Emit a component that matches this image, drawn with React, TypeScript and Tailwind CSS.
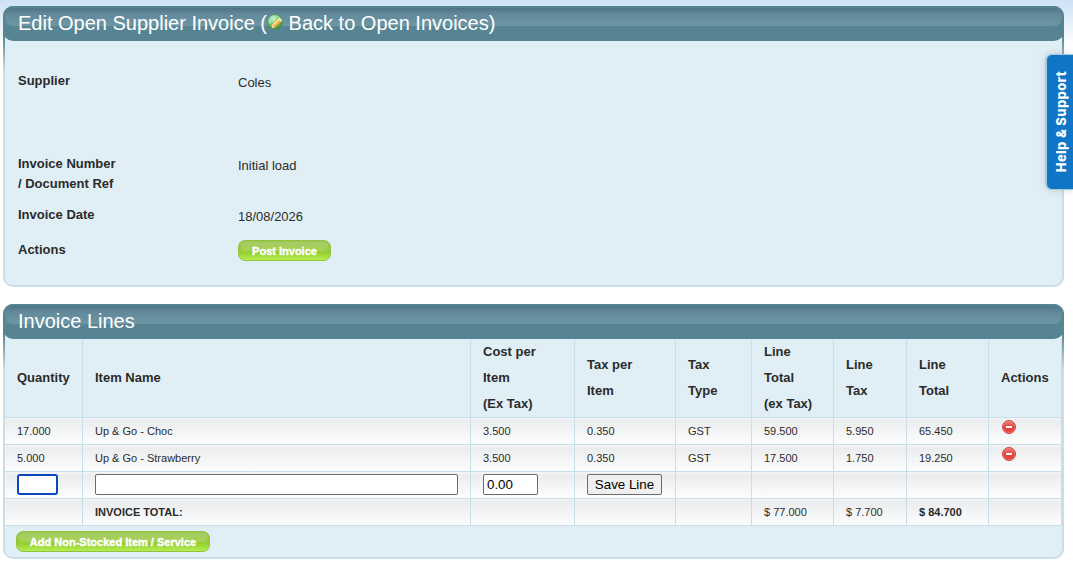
import React, { useState } from "react";

interface InvoiceLine {
  id: string;
  quantity: string;
  name: string;
  cost: string;
  tax: string;
  taxType: string;
  totalExTax: string;
  lineTax: string;
  lineTotal: string;
}

const invoiceLines: InvoiceLine[] = [
  {
    id: "1",
    quantity: "17.000",
    name: "Up & Go - Choc",
    cost: "3.500",
    tax: "0.350",
    taxType: "GST",
    totalExTax: "59.500",
    lineTax: "5.950",
    lineTotal: "65.450",
  },
  {
    id: "2",
    quantity: "5.000",
    name: "Up & Go - Strawberry",
    cost: "3.500",
    tax: "0.350",
    taxType: "GST",
    totalExTax: "17.500",
    lineTax: "1.750",
    lineTotal: "19.250",
  },
];

const columns = [
  { label: ["Quantity"], width: "w-[78px]" },
  { label: ["Item Name"], width: "w-[388px]" },
  { label: ["Cost per", "Item", "(Ex Tax)"], width: "w-[104px]" },
  { label: ["Tax per", "Item"], width: "w-[101px]" },
  { label: ["Tax", "Type"], width: "w-[76px]" },
  { label: ["Line", "Total", "(ex Tax)"], width: "w-[82px]" },
  { label: ["Line", "Tax"], width: "w-[73px]" },
  { label: ["Line", "Total"], width: "w-[82px]" },
  { label: ["Actions"], width: "w-[73px]" },
];

const EditIcon = () => (
  <svg className="w-4 h-4 mb-0.5 shrink-0" viewBox="0 0 16 16">
    <defs>
      <radialGradient id="globe" cx="0.4" cy="0.25" r="0.85">
        <stop offset="0" stopColor="#d2f5c4" />
        <stop offset="0.5" stopColor="#74c969" />
        <stop offset="1" stopColor="#237c35" />
      </radialGradient>
    </defs>
    <circle cx="8" cy="8" r="7.5" fill="url(#globe)" stroke="#3f8f58" strokeWidth="0.8" />
    <path d="M1.4 6.5 Q3 2 8 1.6 L6 5 L3.5 9 L2 10 Z" fill="#a9e0e0" opacity="0.7" />
    <path d="M4 14.6 L5 10.8 L12 4.2 L15 7 L8 13.5 Z" fill="#f3b544" stroke="#b57a1c" strokeWidth="0.6" />
    <path d="M5.6 11.2 L12.3 5" stroke="#fff0a8" strokeWidth="1.4" />
    <path d="M4 14.6 L5 10.8 L8 13.5 Z" fill="#f6deb4" />
    <path d="M4 14.6 L4.4 12.9 L5.7 14.1 Z" fill="#5b3420" />
    <path d="M11.2 4.9 L12.6 3.6 L15.3 6.2 L14 7.7 Z" fill="#e4e7d9" />
  </svg>
);

const RemoveIcon = () => (
  <svg className="block w-[14px] h-[14px]" viewBox="0 0 14 14">
    <defs>
      <linearGradient id="removeFill" x1="0" y1="0" x2="0" y2="1">
        <stop offset="0" stopColor="#ef8078" />
        <stop offset="0.5" stopColor="#e2423b" />
        <stop offset="1" stopColor="#e8463d" />
      </linearGradient>
    </defs>
    <circle cx="7" cy="7" r="6.5" fill="#ec8a83" stroke="#c9443d" strokeWidth="1" />
    <circle cx="7" cy="7" r="5.6" fill="url(#removeFill)" />
    <rect x="4" y="6" width="6" height="2" fill="#fff" />
  </svg>
);

// The strip behind the header keeps its lower corners in the body colour
const PanelHeader: React.FC<{ children: React.ReactNode }> = ({ children }) => (
  <div className="bg-[linear-gradient(#e0eff6,#e0eff6)] bg-[length:1057px_12px] bg-[position:2px_23px] bg-no-repeat">
    <div className="relative h-[35px] rounded-[10px] border-2 border-[#568493] bg-[#578492] before:absolute before:inset-x-0 before:top-0 before:h-[18px] before:rounded-lg before:bg-[linear-gradient(to_bottom,#4e7485_0,#62899a_6px,#6d97a5_18px)]">
      <h2 className="relative flex items-center h-[30px] pl-[13px] text-xl leading-[30px] text-white whitespace-pre">
        {children}
      </h2>
    </div>
  </div>
);

const Panel: React.FC<{
  title: React.ReactNode;
  height: string;
  children: React.ReactNode;
}> = ({ title, height, children }) => (
  <section
    className={`w-[1061px] ${height} rounded-[10px] bg-[linear-gradient(to_bottom,#578492_0,#578492_30px,#c8dee8_65px,#c8dee8_100%)]`}
  >
    <PanelHeader>{title}</PanelHeader>
    <div className="h-[calc(100%-35px)] px-0.5 pb-0.5">
      <div className="h-full rounded-b-lg bg-[#e0eff6]">{children}</div>
    </div>
  </section>
);

const GreenButton: React.FC<{ width: string; children: React.ReactNode }> = ({
  width,
  children,
}) => (
  <button
    className={`${width} relative block h-[21px] rounded-[7px] border border-[#91c43c] bg-[linear-gradient(to_bottom,#9cc653_0,#98cb42_9px,#96d030_12px,#b6ee52_100%)] before:absolute before:inset-x-[2px] before:top-px before:h-[9px] before:rounded-[5px] before:bg-[linear-gradient(to_bottom,#a5cb66,#a8d255)] text-[11px] leading-[20px] font-bold text-white whitespace-nowrap [-webkit-text-stroke:0.4px_white]`}
  >
    <span className="relative">{children}</span>
  </button>
);

const cell =
  "h-[27px] pl-3 pt-px border-r border-b border-[#c8dee8] bg-[linear-gradient(to_bottom,#f4f5f6_0,#ebecee_3px,#fbfcfc_24px,#fbfcfc_100%)]";

const inputCell =
  "h-[27px] pl-3 pb-px border-r border-b border-[#c8dee8] bg-[linear-gradient(to_bottom,#f4f5f6_0,#ebecee_3px,#fbfcfc_24px,#fbfcfc_100%)]";

const App: React.FC = () => {
  const [quantity, setQuantity] = useState("");
  const [itemName, setItemName] = useState("");
  const [cost, setCost] = useState("0.00");

  return (
    <div className="relative h-[562px] overflow-hidden bg-[linear-gradient(to_bottom,#cde2f5_0,#ffffff_45px)] pl-[3px] pt-1.5 font-['Liberation_Sans',Arial,sans-serif] text-[13px] text-[#2b2b2b]">
      <div className="flex flex-col gap-[17px]">
        {/* Invoice details */}
        <Panel
          height="h-[281px]"
          title={
            <>
              Edit Open Supplier Invoice (<EditIcon />
              {" Back to Open Invoices)"}
            </>
          }
        >
          <dl className="grid grid-cols-[220px_1fr] grid-rows-[83px_51px_35px_30px] pl-[13px] pt-[30px] leading-5">
            <dt className="font-bold">Supplier</dt>
            <dd className="pt-0.5">Coles</dd>
            <dt className="font-bold">
              Invoice Number
              <br />/ Document Ref
            </dt>
            <dd className="pt-0.5">Initial load</dd>
            <dt className="font-bold">Invoice Date</dt>
            <dd className="pt-0.5">18/08/2026</dd>
            <dt className="font-bold">Actions</dt>
            <dd>
              <GreenButton width="w-[93px]">Post Invoice</GreenButton>
            </dd>
          </dl>
        </Panel>

        {/* Invoice lines */}
        <Panel height="h-[255px]" title="Invoice Lines">
          <table className="w-[1057px] table-fixed border-separate border-spacing-0 text-left text-[11px]">
            <thead>
              <tr>
                {columns.map((column, index) => (
                  <th
                    key={index}
                    className={`${column.width} h-[79px] pl-3 border-r border-b border-[#c8dee8] text-[13px] leading-[26px] font-bold whitespace-nowrap`}
                  >
                    {column.label.map((line) => (
                      <div key={line}>{line}</div>
                    ))}
                  </th>
                ))}
              </tr>
            </thead>
            <tbody>
              {invoiceLines.map((line) => (
                <tr key={line.id}>
                  <td className={cell}>{line.quantity}</td>
                  <td className={cell}>{line.name}</td>
                  <td className={cell}>{line.cost}</td>
                  <td className={cell}>{line.tax}</td>
                  <td className={cell}>{line.taxType}</td>
                  <td className={cell}>{line.totalExTax}</td>
                  <td className={cell}>{line.lineTax}</td>
                  <td className={cell}>{line.lineTotal}</td>
                  <td className={`${cell} align-top`}>
                    <button className="block pl-px pt-px">
                      <RemoveIcon />
                    </button>
                  </td>
                </tr>
              ))}
              <tr>
                <td className={inputCell}>
                  <input
                    value={quantity}
                    onChange={(e) => setQuantity(e.target.value)}
                    className="block w-[41px] h-[21px] px-0.5 rounded-[3px] border-2 border-[#0b47c1] bg-white text-[13px] outline-none"
                  />
                </td>
                <td className={inputCell}>
                  <input
                    value={itemName}
                    onChange={(e) => setItemName(e.target.value)}
                    className="block w-[363px] h-[21px] px-0.5 rounded-xs border border-[#6b6b6b] bg-white text-[13px]"
                  />
                </td>
                <td className={inputCell}>
                  <input
                    value={cost}
                    onChange={(e) => setCost(e.target.value)}
                    className="block w-[55px] h-[21px] px-[3px] rounded-xs border border-[#6b6b6b] bg-white text-[13.33px] text-black"
                  />
                </td>
                <td className={inputCell}>
                  <button className="block w-[75px] h-[21px] rounded-xs border border-[#6b6b6b] bg-[#efefef] text-[13.33px] leading-[19px] text-black whitespace-nowrap">
                    Save Line
                  </button>
                </td>
                <td className={inputCell} />
                <td className={inputCell} />
                <td className={inputCell} />
                <td className={inputCell} />
                <td className={inputCell} />
              </tr>
              <tr>
                <td className={cell} />
                <td className={`${cell} font-bold`}>INVOICE TOTAL:</td>
                <td className={cell} />
                <td className={cell} />
                <td className={cell} />
                <td className={cell}>$ 77.000</td>
                <td className={cell}>$ 7.700</td>
                <td className={`${cell} font-bold`}>$ 84.700</td>
                <td className={cell} />
              </tr>
            </tbody>
          </table>
          <div className="pl-[11px] pt-[5px]">
            <GreenButton width="w-[194px]">
              Add Non-Stocked Item / Service
            </GreenButton>
          </div>
        </Panel>
      </div>

      {/* Help tab, pinned to the right edge */}
      <button className="absolute right-0 top-[55px] flex items-center justify-center w-[26px] h-[134px] rounded-l-[5px] bg-[#0f75c6] shadow-[-1px_0_0_1px_#a9ccdc,0_0_10px_rgba(0,0,0,0.2)]">
        <span className="rotate-180 [writing-mode:vertical-rl] ml-[3px] font-['Inter',sans-serif] text-[13px] tracking-[0.35px] font-extrabold text-white whitespace-nowrap">
          Help &amp; Support
        </span>
      </button>
    </div>
  );
};

export default App;
